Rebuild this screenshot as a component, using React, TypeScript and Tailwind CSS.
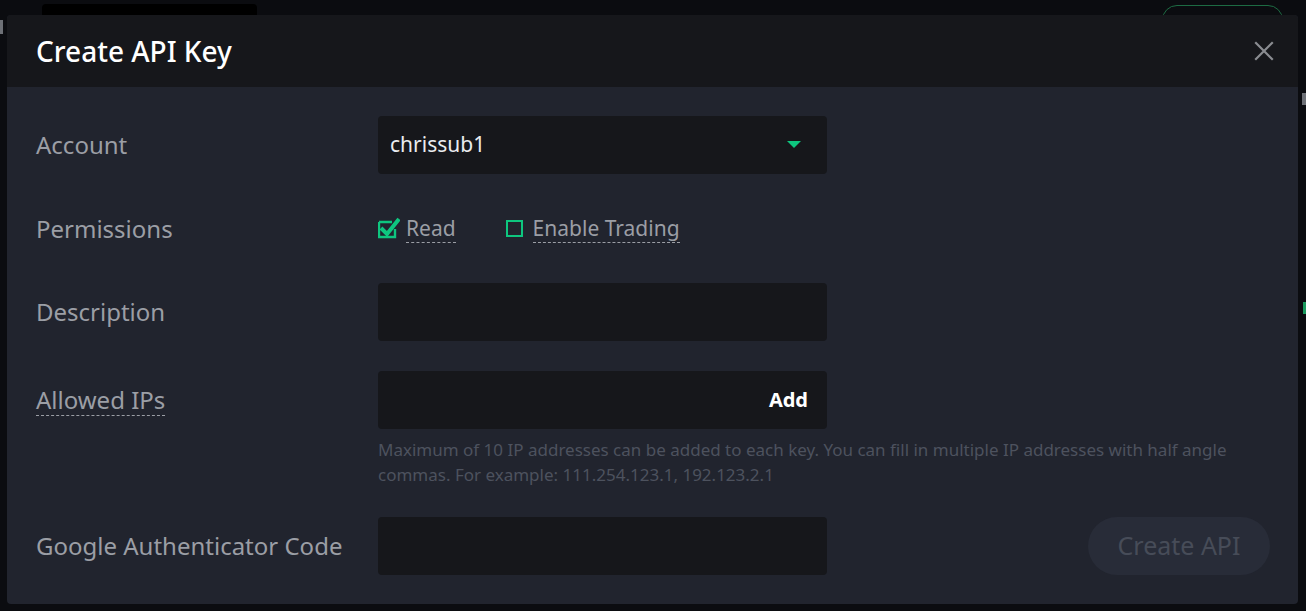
import { useState } from "react";

const Field = ({ children }: { children?: React.ReactNode }) => (
    <div className="w-[449px] h-[58px] rounded bg-[#16171b] flex items-center px-3">{children}</div>
);

const App = () => {
    const [read, setRead] = useState(true);
    const [trading, setTrading] = useState(false);

    return (
        <div className="relative w-[1306px] h-[611px] overflow-hidden bg-[#0b0c10] font-['Noto_Sans',sans-serif]">
            {/* page behind the modal */}
            <div className="absolute left-[42px] top-[4px] w-[215px] h-[14px] rounded bg-black" />
            <div className="absolute left-[1162px] top-[5px] w-[121px] h-[30px] rounded-full border border-[#1d6b43]" />
            <div className="absolute left-0 top-[20px] w-[3px] h-[14px] bg-[#6d7076]" />
            <div className="absolute right-0 top-[93px] w-[4px] h-[12px] bg-[#6d7076]" />
            <div className="absolute right-0 top-[302px] w-[3px] h-[12px] bg-[#1a9a5e]" />

            {/* modal */}
            <div className="absolute left-[7px] top-[15px] w-[1291px] h-[589px] rounded overflow-hidden bg-[#21242e] flex flex-col">
                <div className="h-[72px] bg-[#16171b] flex items-center justify-between pl-[29px] pr-[24px]">
                    <h1 className="text-[28px] text-white font-medium">Create API Key</h1>
                    <svg width="20" height="20" viewBox="0 0 20 20" className="text-[#8a8c91]">
                        <path d="M2 2 L18 18 M18 2 L2 18" stroke="currentColor" strokeWidth="2.2" strokeLinecap="square" />
                    </svg>
                </div>

                <div className="flex-1 pl-[29px] pr-[28px] pt-[29px] flex flex-col text-[#9b9ea5]">
                    <div className="flex items-center">
                        <div className="w-[342px] text-[24px]">Account</div>
                        <div className="w-[449px] h-[58px] rounded bg-[#16171b] flex items-center justify-between pl-3 pr-[26px]">
                            <span className="text-[21px] text-[#eaecef]">chrissub1</span>
                            <svg width="14" height="8" viewBox="0 0 14 8">
                                <path d="M0 0 L14 0 L7 7 Z" fill="#0ec67f" />
                            </svg>
                        </div>
                    </div>

                    <div className="flex items-center mt-[39px] h-[31px]">
                        <div className="w-[342px] text-[24px]">Permissions</div>
                        <div className="flex items-center gap-[50px] text-[21px]">
                            <label className="flex items-center gap-[6px] cursor-pointer" onClick={() => setRead(!read)}>
                                <svg width="22" height="24" viewBox="0 0 22 24" className="-mt-[4px]">
                                    <path d="M1 7 H14 M1 7 V22 H17 V14" stroke="#0ec67f" strokeWidth="2.4" fill="none" />
                                    {read && <path d="M3 13 L9 19 L21 4" stroke="#0ec67f" strokeWidth="4" fill="none" />}
                                </svg>
                                <span className="border-b border-dashed border-[#9b9ea5] leading-[27px]">Read</span>
                            </label>
                            <label className="flex items-center gap-[10px] cursor-pointer" onClick={() => setTrading(!trading)}>
                                <span className={`w-[17px] h-[17px] border-2 border-[#0ec67f] ${trading ? "bg-[#0ec67f]" : ""}`} />
                                <span className="border-b border-dashed border-[#9b9ea5] leading-[27px]">Enable Trading</span>
                            </label>
                        </div>
                    </div>

                    <div className="flex items-center mt-[39px]">
                        <div className="w-[342px] text-[24px]">Description</div>
                        <Field />
                    </div>

                    <div className="flex mt-[30px]">
                        <div className="w-[342px] h-[58px] flex items-center">
                            <span className="text-[24px] border-b border-dashed border-[#9b9ea5] leading-[30px]">Allowed IPs</span>
                        </div>
                        <div className="flex flex-col">
                            <div className="w-[449px] h-[58px] rounded bg-[#16171b] flex items-center justify-end pr-[19px]">
                                <span className="text-[20px] font-bold text-white">Add</span>
                            </div>
                            <p className="mt-[8px] w-[885px] text-[17px] leading-[25px] text-[#4d525e]">
                                Maximum of 10 IP addresses can be added to each key. You can fill in multiple IP addresses with half angle commas. For example: 111.254.123.1, 192.123.2.1
                            </p>
                        </div>
                    </div>

                    <div className="flex items-center mt-[30px]">
                        <div className="w-[342px] text-[24px]">Google Authenticator Code</div>
                        <Field />
                        <div className="flex-1" />
                        <button className="w-[182px] h-[58px] rounded-full bg-[#282c38] text-[25px] text-[#474c58]">
                            Create API
                        </button>
                    </div>
                </div>
            </div>
        </div>
    );
};

export default App;
